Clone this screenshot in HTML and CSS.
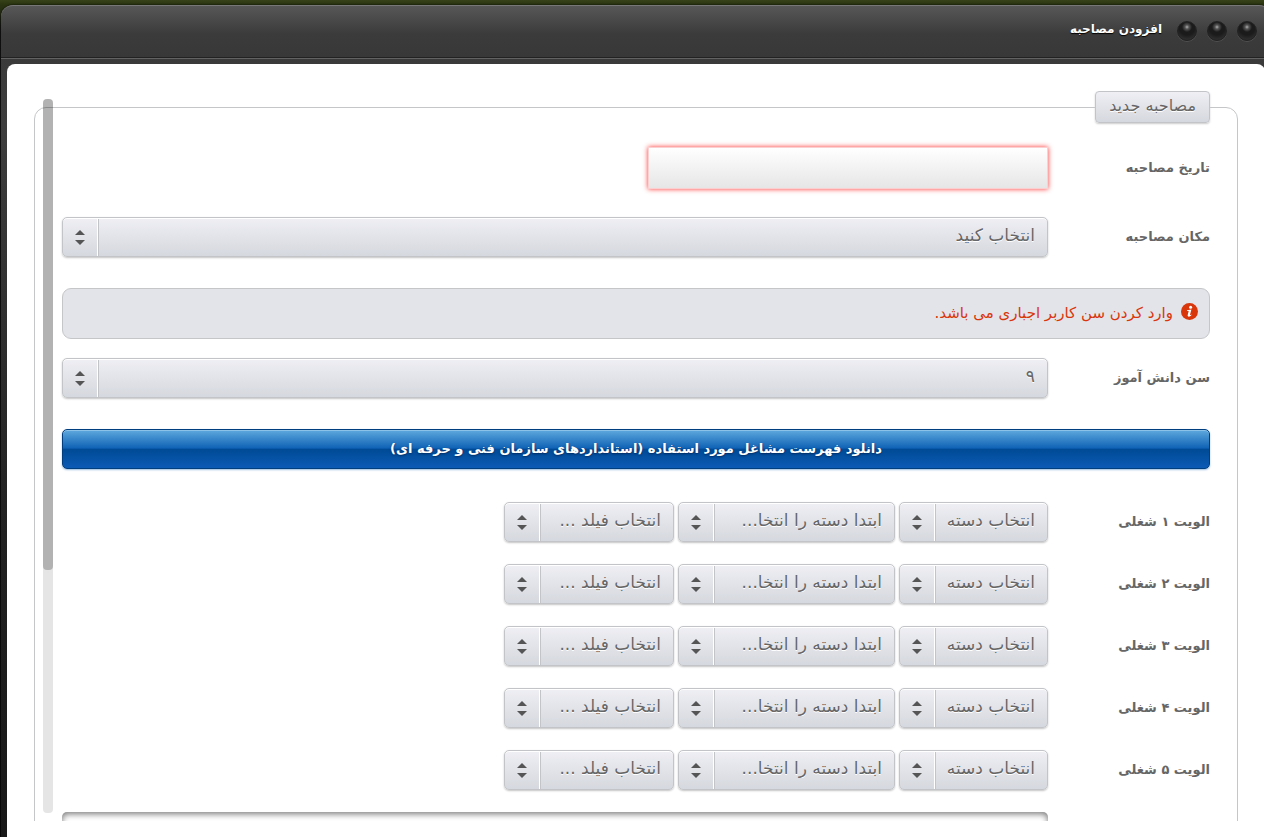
FILE: index.html
```html
<!DOCTYPE html>
<html lang="fa" dir="rtl">
<head>
<meta charset="UTF-8">
<title>افزودن مصاحبه</title>
<link rel="stylesheet" href="styles.css">
</head>
<body>

<div class="modal">
<header class="modal-header">
<div class="window-controls">
<button type="button" class="dot" aria-label="بستن"></button>
<button type="button" class="dot" aria-label="بزرگ کردن"></button>
<button type="button" class="dot" aria-label="کوچک کردن"></button>
</div>
<h1>افزودن مصاحبه</h1>
</header>

<div class="modal-body">
<div class="scroll-area">
<form>
<fieldset>
<legend>مصاحبه جدید</legend>

<div class="row row-date">
<label for="date">تاریخ مصاحبه</label>
<input type="text" id="date" class="date-input">
</div>

<div class="row">
<label for="place">مکان مصاحبه</label>
<div class="select wide"><select id="place"><option>انتخاب کنید</option></select></div>
</div>

<div class="message">
<svg width="17" height="17" viewBox="0 0 17 17" aria-hidden="true">
<circle cx="8.500" cy="8.500" r="8.500" fill="#d9360b"/>
<circle cx="9.600" cy="4.200" r="1.500" fill="#fff"/>
<path d="M6 7.200 L10.400 6.600 L9 11.800 Q8.900 12.500 10.300 11.500 L10.600 12 Q8.800 13.900 7.400 13.600 Q6.300 13.300 6.700 11.900 L7.700 8.100 L6 7.900 Z" fill="#fff"/>
</svg>
<p>وارد کردن سن کاربر اجباری می باشد.</p>
</div>

<div class="row row-age">
<label for="age">سن دانش آموز</label>
<div class="select wide"><select id="age"><option>۹</option></select></div>
</div>

<button type="button" class="download">دانلود فهرست مشاغل مورد استفاده (استانداردهای سازمان فنی و حرفه ای)</button>

<div class="priorities">
<div class="row">
<label for="cat1">الویت ۱ شغلی</label>
<div class="select cat"><select id="cat1"><option>انتخاب دسته</option></select></div>
<div class="select job"><select aria-label="شغل ۱"><option>ابتدا دسته را انتخا...</option></select></div>
<div class="select field"><select aria-label="فیلد ۱"><option>انتخاب فیلد ...</option></select></div>
</div>
<div class="row">
<label for="cat2">الویت ۲ شغلی</label>
<div class="select cat"><select id="cat2"><option>انتخاب دسته</option></select></div>
<div class="select job"><select aria-label="شغل ۲"><option>ابتدا دسته را انتخا...</option></select></div>
<div class="select field"><select aria-label="فیلد ۲"><option>انتخاب فیلد ...</option></select></div>
</div>
<div class="row">
<label for="cat3">الویت ۳ شغلی</label>
<div class="select cat"><select id="cat3"><option>انتخاب دسته</option></select></div>
<div class="select job"><select aria-label="شغل ۳"><option>ابتدا دسته را انتخا...</option></select></div>
<div class="select field"><select aria-label="فیلد ۳"><option>انتخاب فیلد ...</option></select></div>
</div>
<div class="row">
<label for="cat4">الویت ۴ شغلی</label>
<div class="select cat"><select id="cat4"><option>انتخاب دسته</option></select></div>
<div class="select job"><select aria-label="شغل ۴"><option>ابتدا دسته را انتخا...</option></select></div>
<div class="select field"><select aria-label="فیلد ۴"><option>انتخاب فیلد ...</option></select></div>
</div>
<div class="row">
<label for="cat5">الویت ۵ شغلی</label>
<div class="select cat"><select id="cat5"><option>انتخاب دسته</option></select></div>
<div class="select job"><select aria-label="شغل ۵"><option>ابتدا دسته را انتخا...</option></select></div>
<div class="select field"><select aria-label="فیلد ۵"><option>انتخاب فیلد ...</option></select></div>
</div>
</div>

<div class="row row-notes">
<textarea class="notes" rows="5" aria-label="توضیحات"></textarea>
</div>
</fieldset>
</form>
</div>
<div class="scrollbar"><div class="scrollbar-thumb"></div></div>
</div>
</div>

</body>
</html>
```

FILE: styles.css
```css
* { box-sizing: border-box; }
body {
    margin: 0;
    height: 100vh;
    overflow: hidden;
    padding: 5px 1px 0 0;
    background: linear-gradient(#37421a, #2c3612 4px, #151515 30px, #0a0a0a);
    font-family: "DejaVu Sans", sans-serif;
    font-size: 13px;
    color: #666;
}
/* the window runs a little past the right edge of the screen */
.modal {
    height: 100%;
    margin: 0 -8px 0 1px;
    display: flex;
    flex-direction: column;
    border-radius: 12px 12px 0 0;
    background: linear-gradient(#3a3a3a 50px, #3d3d3d 120px, #222 500px, #181818);
    box-shadow: 0 0 2px #000;
}
.modal-header {
    height: 53px;
    flex: none;
    display: flex;
    align-items: flex-start;
    gap: 15px;
    padding: 15px 14px 0 0;
    border-radius: 12px 12px 0 0;
    border-top: 1px solid #777;
    border-bottom: 1px solid #222;
    background: linear-gradient(#575757, #3b3b3b 28px, #383838);
    box-shadow: 0 1px 0 #626262;
}
.modal-header h1 {
    margin: 0;
    font-size: 12px;
    line-height: 16px;
    color: #fff;
    text-shadow: 0 1px 1px #000;
}
.window-controls {
    display: flex;
    gap: 10px;
}
.dot {
    width: 20px;
    height: 20px;
    padding: 0;
    border: 1px solid #222;
    border-radius: 50%;
    background: radial-gradient(circle at 50% 28%, #b0b0b0 0, #555 2px, #1b1b1b 5px, #1b1b1b 8px, #2c2c2c 12px);
    box-shadow: 0 1px 0 #505050;
}
.modal-body {
    position: relative;
    flex: 1;
    min-height: 0;
    margin: 6px 6px 0;
    padding: 27px 27px 16px;
    background: #fff;
    border-radius: 8px 8px 0 0;
}
.scroll-area {
    height: 100%;
    overflow: hidden;
}
fieldset {
    margin: 0;
    min-width: 0;
    padding: 24px 27px 30px;
    border: 1px solid #c5c6c8;
    border-radius: 12px;
}
legend {
    padding: 0 13px;
    height: 32px;
    font-size: 16px;
    line-height: 28px;
    border: 1px solid #c2c4c8;
    border-radius: 4px;
    background: linear-gradient(#efeff4, #d5d8de);
    box-shadow: 0 1px 2px #ccc;
    text-shadow: 0 1px 0 #fff;
}
.row {
    display: flex;
    align-items: center;
    gap: 4px;
    margin-bottom: 22px;
}
.row label {
    width: 158px;
    flex: none;
    font-weight: bold;
    line-height: 20px;
}
.row-date {
    margin-bottom: 28px;
}
.date-input {
    width: 400px;
    height: 42px;
    border: 1px solid #fbd0d0;
    padding: 0 12px;
    font: inherit;
    background: linear-gradient(#fff, #e6e6e6);
    box-shadow: 0 0 5px #ff3030;
    outline: none;
}
.select {
    position: relative;
    flex: none;
}
.select.wide {
    flex: 1;
}
.select select {
    appearance: none;
    display: block;
    width: 100%;
    height: 40px;
    padding: 0 12px 4px 36px;
    border: 1px solid #c2c4c8;
    border-radius: 5px;
    background:
        linear-gradient(to right, transparent 34px, #fff 34px, #fff 35px, #c2c4c8 35px, #c2c4c8 36px, transparent 36px),
        linear-gradient(#efeff4, #d5d8de);
    box-shadow: 0 1px 2px #c4c4c4, inset 0 1px 0 #fff;
    font: inherit;
    font-size: 17px;
    color: #666;
    text-shadow: 0 1px 0 #fff;
}
.select::before,
.select::after {
    content: "";
    position: absolute;
    left: 13px;
    border: 5px solid transparent;
    pointer-events: none;
}
.select::before {
    top: 13px;
    border-top: 0;
    border-bottom-color: #555;
}
.select::after {
    top: 23px;
    border-bottom: 0;
    border-top-color: #555;
}
.cat { width: 149px; }
.job { width: 217px; }
.field { width: 170px; }
.message {
    display: flex;
    gap: 8px;
    height: 51px;
    margin: 31px 0 19px;
    padding: 14px 11px;
    border: 1px solid #c5c6c8;
    border-radius: 9px;
    background: #e3e4ea;
    color: #d9360b;
}
.message p {
    margin: 0;
    font-size: 15px;
    line-height: 20px;
}
.row-age {
    margin-bottom: 31px;
}
.download {
    display: block;
    width: 100%;
    height: 40px;
    padding: 0 0 2px;
    border: 1px solid #003e80;
    border-radius: 5px;
    background: linear-gradient(#5fa9de, #0f62b5 48%, #004a95 50%, #0b5ab5);
    box-shadow: 0 1px 2px #9bbde0, inset 0 1px 0 #8cc2e8;
    font: inherit;
    font-weight: bold;
    color: #fff;
    text-shadow: 0 1px 2px #002b60;
}
.priorities {
    margin-top: 33px;
}
.row-notes {
    margin: 20px 162px 0 0;
}
.notes {
    width: 100%;
    border: 0;
    border-radius: 5px;
    padding: 10px;
    font: inherit;
    background: #fff;
    box-shadow: inset 0 2px 6px #777;
    resize: none;
}
.scrollbar {
    position: absolute;
    left: 36px;
    top: 35px;
    bottom: 24px;
    width: 10px;
    border-radius: 4px;
    background: rgba(0, 0, 0, 0.1);
}
.scrollbar-thumb {
    height: 66%;
    border-radius: 4px;
    background: rgba(0, 0, 0, 0.22);
}
```
